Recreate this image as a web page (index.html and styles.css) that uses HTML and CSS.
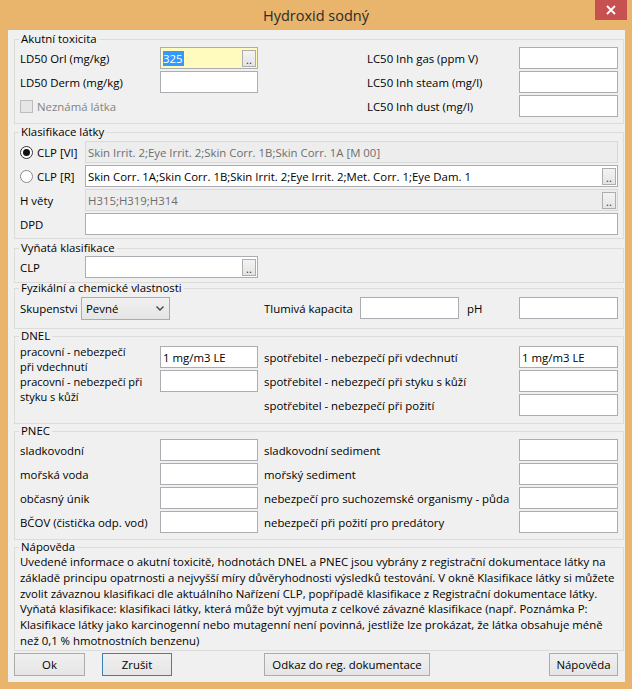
FILE: index.html
```html
<!DOCTYPE html>
<html lang="cs">
<head>
<meta charset="utf-8">
<title>Hydroxid sodný</title>
<link rel="stylesheet" href="styles.css">
</head>
<body>
<div class="window">
  <header class="titlebar">
    <span class="title">Hydroxid sodný</span>
    <button class="close" aria-label="Zavřít">
      <svg width="10" height="10" viewBox="0 0 10 10"><path d="M1 1L9 9M9 1L1 9" stroke="#fff" stroke-width="1.8" fill="none"/></svg>
    </button>
  </header>
  <main class="client">
    <fieldset class="group g-acute">
      <legend>Akutní toxicita</legend>
      <div class="grid grid-acute">
        <span class="lbl">LD50 Orl (mg/kg)</span>
        <div class="field active"><span class="sel">325</span><span class="dots">..</span></div>
        <span></span>
        <span class="lbl">LC50 Inh gas (ppm V)</span>
        <div class="field"></div>

        <span class="lbl">LD50 Derm (mg/kg)</span>
        <div class="field"></div>
        <span></span>
        <span class="lbl">LC50 Inh steam (mg/l)</span>
        <div class="field"></div>

        <span class="check span3"><i></i>Neznámá látka</span>
        <span class="lbl">LC50 Inh dust (mg/l)</span>
        <div class="field"></div>
      </div>
    </fieldset>

    <fieldset class="group g-class">
      <legend>Klasifikace látky</legend>
      <div class="grid grid-class">
        <span class="radio on"><i></i>CLP [VI]</span>
        <div class="field disabled">Skin Irrit. 2;Eye Irrit. 2;Skin Corr. 1B;Skin Corr. 1A [M 00]</div>

        <span class="radio"><i></i>CLP [R]</span>
        <div class="field">Skin Corr. 1A;Skin Corr. 1B;Skin Irrit. 2;Eye Irrit. 2;Met. Corr. 1;Eye Dam. 1<span class="dots">..</span></div>

        <span class="lbl">H věty</span>
        <div class="field disabled">H315;H319;H314<span class="dots">..</span></div>

        <span class="lbl">DPD</span>
        <div class="field"></div>
      </div>
    </fieldset>

    <fieldset class="group g-excl">
      <legend>Vyňatá klasifikace</legend>
      <div class="grid grid-excl">
        <span class="lbl">CLP</span>
        <div class="field"><span class="dots">..</span></div>
      </div>
    </fieldset>

    <fieldset class="group g-phys">
      <legend>Fyzikální a chemické vlastnosti</legend>
      <div class="grid grid-phys">
        <span class="lbl">Skupenstvi</span>
        <div class="select">Pevné<svg class="chev" width="8" height="5" viewBox="0 0 8 5"><path d="M0.5 0.5L4 4L7.5 0.5" stroke="#444" stroke-width="1.4" fill="none"/></svg></div>
        <span></span>
        <span class="lbl">Tlumivá kapacita</span>
        <div class="field"></div>
        <span></span>
        <span class="lbl">pH</span>
        <div class="field"></div>
      </div>
    </fieldset>

    <fieldset class="group g-dnel">
      <legend>DNEL</legend>
      <div class="grid grid-pair">
        <span class="two two-a">pracovní - nebezpečí<br>při vdechnutí</span>
        <div class="field">1 mg/m3 LE</div>
        <span></span>
        <span class="lbl">spotřebitel - nebezpečí při vdechnutí</span>
        <div class="field">1 mg/m3 LE</div>

        <span class="two two-b">pracovní - nebezpečí při<br>styku s kůží</span>
        <div class="field"></div>
        <span></span>
        <span class="lbl">spotřebitel - nebezpečí při styku s kůží</span>
        <div class="field"></div>

        <span class="lbl right-start">spotřebitel - nebezpečí při požití</span>
        <div class="field"></div>
      </div>
    </fieldset>

    <fieldset class="group g-pnec">
      <legend>PNEC</legend>
      <div class="grid grid-pair">
        <span class="lbl">sladkovodní</span>
        <div class="field"></div>
        <span></span>
        <span class="lbl">sladkovodní sediment</span>
        <div class="field"></div>

        <span class="lbl">mořská voda</span>
        <div class="field"></div>
        <span></span>
        <span class="lbl">mořský sediment</span>
        <div class="field"></div>

        <span class="lbl">občasný únik</span>
        <div class="field"></div>
        <span></span>
        <span class="lbl">nebezpečí pro suchozemské organismy - půda</span>
        <div class="field"></div>

        <span class="lbl">BČOV (čistička odp. vod)</span>
        <div class="field"></div>
        <span></span>
        <span class="lbl">nebezpečí při požití pro predátory</span>
        <div class="field"></div>
      </div>
    </fieldset>

    <fieldset class="group g-help">
      <legend>Nápověda</legend>
      <p class="help">Uvedené informace o akutní toxicitě, hodnotách DNEL a PNEC jsou vybrány z registrační dokumentace látky na<br>základě principu opatrnosti a nejvyšší míry důvěryhodnosti výsledků testování. V okně Klasifikace látky si můžete<br>zvolit závaznou klasifikaci dle aktuálního Nařízení CLP, popřípadě klasifikace z Registrační dokumentace látky.<br>Vyňatá klasifikace: klasifikaci látky, která může být vyjmuta z celkové závazné klasifikace (např. Poznámka P:<br>Klasifikace látky jako karcinogenní nebo mutagenní není povinná, jestliže lze prokázat, že látka obsahuje méně<br>než 0,1 % hmotnostních benzenu)</p>
    </fieldset>

    <div class="buttons">
      <button class="btn btn-ok">Ok</button>
      <button class="btn btn-cancel default">Zrušit</button>
      <button class="btn btn-link">Odkaz do reg. dokumentace</button>
      <button class="btn btn-help">Nápověda</button>
    </div>
  </main>
</div>
</body>
</html>
```

FILE: styles.css
```css
* { box-sizing: border-box; }
html, body { margin: 0; padding: 0; }
body {
  background: #e9b46b;
  font-family: "Open Sans", "Segoe UI", "Noto Sans", sans-serif;
  font-size: 11.4px;
  color: #000;
}
.window {
  width: 632px;
  height: 689px;
  display: flex;
  flex-direction: column;
}
.titlebar {
  height: 30px;
  position: relative;
  display: flex;
  align-items: center;
  justify-content: center;
}
.title {
  font-size: 14.5px;
  color: #2b2b2b;
}
.close {
  position: absolute;
  top: 0;
  right: 5px;
  width: 32px;
  height: 20px;
  background: #c75050;
  border: 0;
  padding: 0;
  display: flex;
  align-items: center;
  justify-content: center;
}
.client {
  margin: 0 7px 0 8px;
  height: 652px;
  background: #f0f0f0;
  padding: 1px 1px 0 6px;
  display: flex;
  flex-direction: column;
}
.group {
  margin: 0;
  border: 1px solid #dcdcdc;
  padding: 0 4px 0 5px;
  min-width: 0;
}
.group legend {
  padding: 0 2px;
  margin-left: -1px;
  line-height: 16px;
  height: 16px;
}
.g-acute { padding-bottom: 6px; }
.g-class { padding-top: 1px; padding-bottom: 3px; }
.g-excl { margin-top: 1px; padding-bottom: 4px; }
.g-phys { margin-top: -3px; padding-top: 1px; padding-bottom: 8px; }
.g-dnel { margin-top: -1px; padding-top: 2px; padding-bottom: 7px; }
.g-pnec { margin-top: -1px; padding-bottom: 6px; }
.g-help { margin-top: -1px; padding-bottom: 1px; }

.grid {
  display: grid;
  grid-auto-rows: 22px;
  row-gap: 2px;
}
.grid-acute { grid-template-columns: 140px 98px 109px 152px 99px; }
.grid-class { grid-template-columns: 65px 533px; }
.grid-excl { grid-template-columns: 65px 173px; }
.grid-phys { grid-template-columns: 61px 89px 94px 96px 99px 8px 52px 99px; grid-auto-rows: 23px; }
.grid-pair { grid-template-columns: 140px 98px 6px 255px 99px; }
.span3 { grid-column: span 3; }
.right-start { grid-column: 4; }

.lbl {
  display: flex;
  align-items: center;
  white-space: nowrap;
}
.two {
  align-self: start;
  font-size: 11px;
  line-height: 15px;
  height: 30px;
  white-space: nowrap;
}
.two-a { margin-top: -2px; }
.two-b { margin-top: 4px; }

.field {
  height: 22px;
  border: 1px solid #abadb3;
  background: #fff;
  display: flex;
  align-items: center;
  padding: 0 1px 0 2px;
  white-space: nowrap;
  overflow: hidden;
}
.field.disabled {
  background: #ededed;
  border-color: #d9d9d9;
  color: #6d6d6d;
}
.field.active { background: #fffbbf; }
.sel {
  background: #3399ff;
  color: #fff;
  line-height: 15px;
  padding: 0 1px 0 0;
}
.dots {
  margin-left: auto;
  width: 14px;
  height: 17px;
  border: 1px solid #adadad;
  background: linear-gradient(#f3f3f3, #e4e4e4);
  color: #333;
  font-size: 11px;
  line-height: 18px;
  text-align: center;
  letter-spacing: 0;
}

.radio, .check {
  display: flex;
  align-items: center;
  gap: 4px;
  white-space: nowrap;
}
.radio i {
  width: 13px;
  height: 13px;
  border-radius: 50%;
  border: 1px solid #8a8a8a;
  background: #fff;
  position: relative;
}
.radio.on i { border-color: #333; }
.radio.on i::after {
  content: "";
  position: absolute;
  inset: 2px;
  border-radius: 50%;
  background: #111;
}
.check { color: #838383; }
.check i {
  width: 13px;
  height: 13px;
  border: 1px solid #bcbcbc;
  background: #e6e6e6;
}

.select {
  height: 23px;
  border: 1px solid #acacac;
  background: linear-gradient(#f0f0f0, #e5e5e5);
  display: flex;
  align-items: center;
  justify-content: space-between;
  padding: 0 5px 0 4px;
}

.help {
  margin: -1px 0 0;
  line-height: 15.8px;
  white-space: nowrap;
}

.buttons {
  display: flex;
  margin-top: 2px;
  padding-right: 6px;
}
.btn {
  height: 23px;
  border: 1px solid #acacac;
  background: linear-gradient(#f0f0f0, #e5e5e5);
  font: inherit;
  color: #000;
  padding: 0;
}
.btn.default { border-color: #3c7fb1; }
.btn-ok { width: 71px; }
.btn-cancel { width: 70px; margin-left: 17px; }
.btn-link { width: 166px; margin-left: 92px; }
.btn-help { width: 69px; margin-left: auto; }
```
